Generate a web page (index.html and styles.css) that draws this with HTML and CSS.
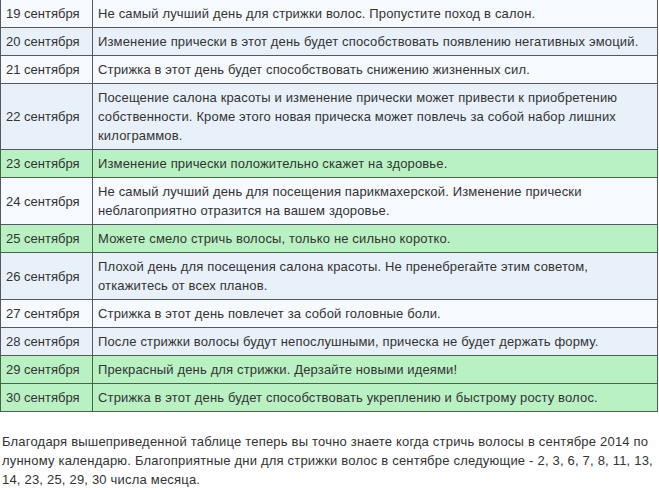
FILE: index.html
```html
<!DOCTYPE html>
<html lang="ru">
<head>
<meta charset="utf-8">
<link rel="stylesheet" href="styles.css">
</head>
<body>
<table class="moon">
  <tr class="w"><td class="d">19 сентября</td><td>Не самый лучший день для стрижки волос. Пропустите поход в салон.</td></tr>
  <tr class="b"><td class="d">20 сентября</td><td>Изменение прически в этот день будет способствовать появлению негативных эмоций.</td></tr>
  <tr class="w"><td class="d">21 сентября</td><td>Стрижка в этот день будет способствовать снижению жизненных сил.</td></tr>
  <tr class="b"><td class="d">22 сентября</td><td>Посещение салона красоты и изменение прически может привести к приобретению собственности. Кроме этого новая прическа может повлечь за собой набор лишних килограммов.</td></tr>
  <tr class="g"><td class="d">23 сентября</td><td>Изменение прически положительно скажет на здоровье.</td></tr>
  <tr class="w"><td class="d">24 сентября</td><td>Не самый лучший день для посещения парикмахерской. Изменение прически неблагоприятно отразится на вашем здоровье.</td></tr>
  <tr class="g"><td class="d">25 сентября</td><td>Можете смело стричь волосы, только не сильно коротко.</td></tr>
  <tr class="b"><td class="d">26 сентября</td><td>Плохой день для посещения салона красоты. Не пренебрегайте этим советом, откажитесь от всех планов.</td></tr>
  <tr class="w"><td class="d">27 сентября</td><td>Стрижка в этот день повлечет за собой головные боли.</td></tr>
  <tr class="b"><td class="d">28 сентября</td><td>После стрижки волосы будут непослушными, прическа не будет держать форму.</td></tr>
  <tr class="g"><td class="d">29 сентября</td><td>Прекрасный день для стрижки. Дерзайте новыми идеями!</td></tr>
  <tr class="g"><td class="d">30 сентября</td><td>Стрижка в этот день будет способствовать укреплению и быстрому росту волос.</td></tr>
</table>
<p class="note">Благодаря вышеприведенной таблице теперь вы точно знаете когда стричь волосы в сентябре 2014 по лунному календарю. Благоприятные дни для стрижки волос в сентябре следующие - 2, 3, 6, 7, 8, 11, 13, 14, 23, 25, 29, 30 числа месяца.</p>
</body>
</html>
```
FILE: styles.css
```css
html, body {
  margin: 0;
  padding: 0;
  background: #ffffff;
}
body {
  font-family: "Liberation Sans", Arial, sans-serif;
  font-size: 13px;
  color: #333333;
}
.moon {
  border-collapse: collapse;
  width: 658px;
  margin-top: -1px;
  letter-spacing: 0.15px;
}
.moon td {
  border: 1px solid #55595f;
  padding: 4px 5px 4px 5px;
  line-height: 19px;
  vertical-align: middle;
  text-align: left;
}
.moon td.d {
  width: 81px;
  white-space: nowrap;
  letter-spacing: 0;
}
.moon tr.w td { background: #f6f9fd; }
.moon tr.b td { background: #e8f0f9; }
.moon tr.g td { background: #b9f1c3; border-color: #46644c; }
.note {
  margin: 20px 0 0 2px;
  width: 657px;
  line-height: 19px;
  letter-spacing: 0.2px;
}
```
